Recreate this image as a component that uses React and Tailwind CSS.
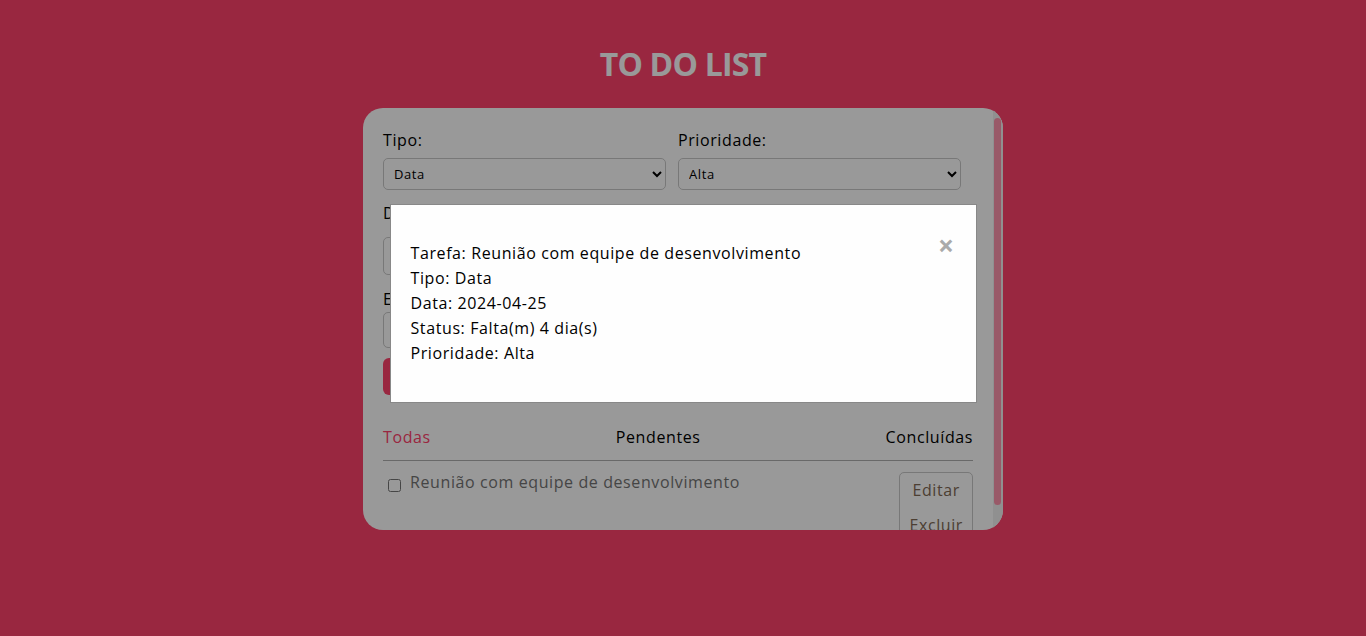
import React from "react";

const font = { fontFamily: '"Open Sans", "Noto Sans", sans-serif', letterSpacing: "0.6px" };

const TaskModal = () => (
  <div className="fixed inset-0 z-10 bg-black/40">
    <div className="mx-auto mt-[204px] w-[587px] border border-[#888] bg-[#fefefe] p-[20px] text-[16px] leading-[25px] text-black">
      <span className="float-right text-[28px] leading-[28px] font-bold text-[#aaa] mt-[6px] mr-[1px] cursor-pointer">
        ×
      </span>
      <p className="my-[16px]">
        Tarefa: Reunião com equipe de desenvolvimento
        <br />
        Tipo: Data
        <br />
        Data: 2024-04-25
        <br />
        Status: Falta(m) 4 dia(s)
        <br />
        Prioridade: Alta
      </p>
    </div>
  </div>
);

export default function App() {
  return (
    <div className="min-h-screen bg-[#ff416b] flex flex-col items-center pt-[40px]" style={font}>
      <h1 className="text-[32px] leading-[48px] font-bold text-white tracking-[-0.8px]">TO DO LIST</h1>

      <div className="mt-[20px] w-[640px] h-[422px] rounded-[20px] bg-white overflow-hidden flex">
        <div className="flex-1 min-w-0 p-[20px] overflow-hidden">
          <div className="grid grid-cols-2">
            <div>
              <label className="block text-[16px] leading-[24px] text-black">Tipo:</label>
              <select className="mt-[6px] w-[96%] h-[32px] border border-[#c8c8c8] rounded-[5px] bg-white pl-[6px] text-[13px] text-black">
                <option>Data</option>
                <option>Prazo</option>
              </select>
            </div>
            <div>
              <label className="block text-[16px] leading-[24px] text-black">Prioridade:</label>
              <select className="mt-[6px] w-[96%] h-[32px] border border-[#c8c8c8] rounded-[5px] bg-white pl-[6px] text-[13px] text-black">
                <option>Alta</option>
                <option>Média</option>
                <option>Baixa</option>
              </select>
            </div>
          </div>

          <label className="block mt-[11px] text-[16px] leading-[24px] text-black">Data:</label>
          <input type="text" className="block mt-[12px] w-full h-[38px] border border-[#c8c8c8] rounded-[5px]" />

          <label className="block mt-[12px] text-[16px] leading-[24px] text-black">Escreva a tarefa:</label>
          <input type="text" className="block mt-[1px] w-full h-[36px] border border-[#c8c8c8] rounded-[5px]" />

          <button className="block mt-[10px] w-full h-[37px] rounded-[6px] bg-[#ff416b] text-white text-[16px]">
            Adicionar tarefa
          </button>

          <div className="mt-[30px] flex justify-between border-b border-[#b0b0b0] pb-[11px] text-[16px] leading-[24px]">
            <span className="text-[#ff416b]">Todas</span>
            <span className="text-black">Pendentes</span>
            <span className="text-black">Concluídas</span>
          </div>

          <div className="mt-[9px] flex justify-between items-start">
            <div className="flex items-start">
              <input type="checkbox" className="ml-[5px] mt-[9px] w-[13px] h-[13px]" />
              <span className="ml-[9px] text-[16px] leading-[24px] text-[#747474]">
                Reunião com equipe de desenvolvimento
              </span>
            </div>
            <div className="mt-[2px] flex flex-col gap-[11px] border border-[#c8c8c8] rounded-[5px] px-[9px] pt-[5px] pb-[5px] text-[16px] leading-[24px] text-[#7f6a56]">
              <button>Editar</button>
              <button>Excluir</button>
            </div>
          </div>
        </div>

        <div className="w-[10px] shrink-0 bg-[#f1f1f1] pt-[10px]">
          <div className="ml-[1px] w-[7px] h-[387px] rounded-[4px] bg-[#ff94ad]" />
        </div>
      </div>

      <TaskModal />
    </div>
  );
}
